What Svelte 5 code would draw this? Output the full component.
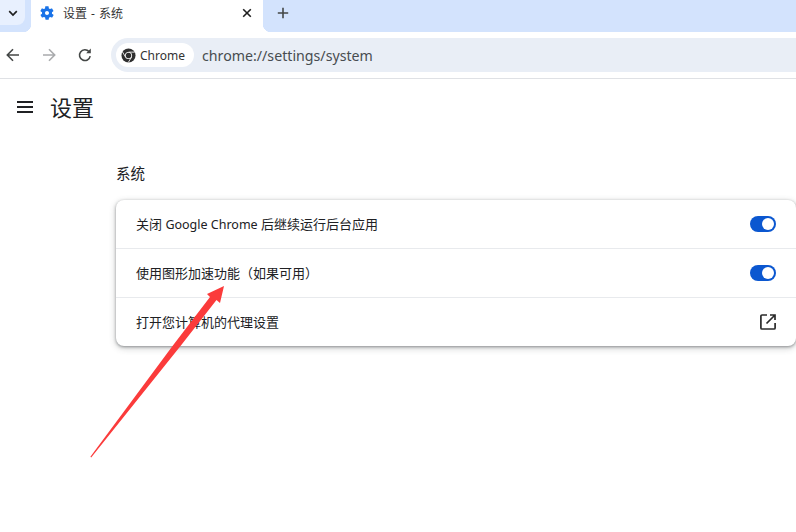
<script>
  const rows = [
    { before: "关闭 ", latin: "Google Chrome", after: " 后继续运行后台应用", toggle: true },
    { before: "使用图形加速功能（如果可用）", toggle: true },
    { before: "打开您计算机的代理设置", toggle: false },
  ];
</script>

<div class="browser">
  <header class="tabstrip">
    <button class="tab-search" aria-label="搜索标签页">
      <svg width="12" height="12" viewBox="0 0 12 12"><path d="M2.2 4.2 6 8l3.8-3.8" fill="none" stroke="#1f1f1f" stroke-width="1.7" /></svg>
    </button>
    <div class="tab">
      <svg class="gear" width="16" height="16" viewBox="0 0 24 24"><path fill="#1a73e8" d="M19.4 13c.1-.3.1-.7.1-1s0-.7-.1-1l2.1-1.6c.2-.2.2-.4.1-.6l-2-3.5c-.1-.2-.4-.3-.6-.2l-2.5 1c-.5-.4-1.1-.7-1.7-1l-.4-2.6c0-.3-.2-.5-.5-.5h-4c-.3 0-.5.2-.5.4l-.4 2.7c-.6.2-1.1.6-1.7 1l-2.5-1c-.2-.1-.5 0-.6.2l-2 3.5c-.1.2-.1.5.1.6L4.600 11c0 .3-.1.7-.1 1s0 .7.1 1l-2.1 1.6c-.2.2-.2.4-.1.6l2 3.500c.1.2.4.3.6.2l2.500-1c.5.4 1.100.7 1.700 1l.4 2.600c0 .3.2.5.5.5h4c.3 0 .5-.2.5-.4l.4-2.700c.6-.2 1.100-.6 1.700-1l2.500 1c.2.1.5 0 .6-.2l2-3.500c.1-.2.1-.5-.1-.6L19.400 13zM12 15c-1.700 0-3-1.300-3-3s1.300-3 3-3 3 1.300 3 3-1.300 3-3 3z" /></svg>
      <span class="tab-title">设置 - 系统</span>
      <svg class="tab-close" width="10" height="10" viewBox="0 0 10 10"><path d="M1.200 1.200l7.600 7.600M8.800 1.200 1.200 8.800" stroke="#1f1f1f" stroke-width="1.6" /></svg>
    </div>
    <svg class="new-tab" width="12" height="12" viewBox="0 0 12 12"><path d="M6 .8v10.400M.8 6h10.400" stroke="#444746" stroke-width="1.6" /></svg>
  </header>

  <nav class="toolbar">
    <div class="nav-icons">
      <svg width="16" height="16" viewBox="0 0 16 16"><path d="M14 8H2.500M8 2.200 2.300 8 8 13.800" fill="none" stroke="#444746" stroke-width="1.6" /></svg>
      <svg width="16" height="16" viewBox="0 0 16 16"><path d="M2 8h11.500M8 2.200 13.700 8 8 13.800" fill="none" stroke="#a9abad" stroke-width="1.6" /></svg>
      <svg width="16" height="16" viewBox="0 0 16 16"><path d="M13.200 9.200A5.400 5.400 0 1 1 12 4.600" fill="none" stroke="#444746" stroke-width="1.6" /><path d="M13.800 1.600v4.600H9.200z" fill="#444746" /></svg>
    </div>
    <div class="omnibox">
      <div class="chip">
        <svg width="15" height="15" viewBox="0 0 16 16">
          <circle cx="8" cy="8" r="7.500" fill="#2f2f2f" />
          <path d="M8 4.400h6.600M4.900 9.800 1.600 4.200M11.100 9.800 7.800 15.400" stroke="#fff" stroke-width="0.9" />
          <circle cx="8" cy="8" r="3.800" fill="#fff" />
          <circle cx="8" cy="8" r="2.900" fill="#2f2f2f" />
        </svg>
        <span>Chrome</span>
      </div>
      <span class="url">chrome://settings/system</span>
    </div>
  </nav>

  <main class="page">
    <div class="page-head">
      <svg class="menu" width="16" height="12" viewBox="0 0 16 12"><path d="M0 1h16M0 6h16M0 11h16" stroke="#202124" stroke-width="2" /></svg>
      <h1>设置</h1>
    </div>

    <section class="system">
      <h2>系统</h2>
      <div class="card">
        {#each rows as row}
          <div class="row">
            <span class="label">{row.before}{#if row.latin}<span class="latin">{row.latin}</span>{row.after}{/if}</span>
            {#if row.toggle}
              <div class="toggle"><i></i></div>
            {:else}
              <svg width="16" height="16" viewBox="0 0 16 16"><path d="M7 1H2a1.100 1.100 0 0 0-1.100 1.100v11.800A1.100 1.100 0 0 0 2 15h12a1.100 1.100 0 0 0 1.100-1.100V9" fill="none" stroke="#2b2b2b" stroke-width="1.700" /><path d="M10 1h5v5M15 1 6.500 9.500" fill="none" stroke="#2b2b2b" stroke-width="1.700" /></svg>
            {/if}
          </div>
        {/each}
      </div>
    </section>
  </main>

  <svg class="arrow" width="796" height="532" viewBox="0 0 796 532">
    <path fill="#fb3b3b" d="M90.400 456.800 L172.500 346 L210 297 L207 294 L224 286 L220 303 L216.500 300 L180.500 346 L91.200 457.600 Z" />
  </svg>
</div>

<style>
  :global(body) {
    margin: 0;
    background: #fff;
    font-family: "Noto Sans", "Noto Sans CJK SC", sans-serif;
    color: #1f1f1f;
  }

  .browser {
    position: relative;
    width: 796px;
    height: 532px;
    overflow: hidden;
  }

  .tabstrip {
    display: flex;
    align-items: flex-start;
    height: 32px;
    background: #d3e3fd;
  }

  .tab-search {
    display: flex;
    align-items: center;
    justify-content: center;
    width: 25px;
    height: 25px;
    padding: 0;
    border: none;
    border-bottom-right-radius: 8px;
    background: #e8f0fe;
  }

  .tab {
    position: relative;
    display: flex;
    align-items: center;
    box-sizing: border-box;
    width: 232px;
    height: 32px;
    margin-left: 6px;
    padding: 0 11px 7px 8px;
    background: #fff;
  }

  .tab::before,
  .tab::after {
    content: "";
    position: absolute;
    bottom: 0;
    width: 8px;
    height: 8px;
  }

  .tab::before {
    left: -8px;
    background: radial-gradient(circle at 0 0, transparent 8px, #fff 8.5px);
  }

  .tab::after {
    right: -8px;
    background: radial-gradient(circle at 100% 0, transparent 8px, #fff 8.5px);
  }

  .gear {
    flex: none;
  }

  .tab-title {
    flex: 1;
    margin-left: 8px;
    font-size: 12px;
    word-spacing: 1px;
    color: #333;
  }

  .new-tab {
    margin: 7px 0 0 14px;
  }

  .toolbar {
    display: flex;
    align-items: center;
    box-sizing: border-box;
    height: 47px;
    padding-left: 5px;
    border-bottom: 1px solid #dfe1e5;
  }

  .nav-icons {
    display: flex;
    gap: 20px;
    align-items: center;
    width: 106px;
    flex: none;
  }

  .omnibox {
    display: flex;
    align-items: center;
    flex: 1;
    height: 34px;
    padding-left: 5px;
    border-radius: 17px 0 0 17px;
    background: #e9eef6;
  }

  .chip {
    display: flex;
    align-items: center;
    gap: 4px;
    box-sizing: border-box;
    width: 78px;
    height: 24px;
    padding-left: 5px;
    border-radius: 12px;
    background: #fff;
    font-size: 12px;
    color: #333;
  }

  .url {
    margin-left: 8px;
    font-size: 14.2px;
    color: #474c50;
  }

  .page-head {
    display: flex;
    align-items: center;
    gap: 17px;
    height: 54px;
    padding-left: 17px;
  }

  .menu {
    margin-top: 2px;
  }

  h1 {
    margin: 0;
    font-size: 22px;
    font-weight: 400;
    color: #202124;
  }

  .system {
    padding: 30px 0 0 116px;
  }

  h2 {
    margin: 0 0 17px;
    font-size: 14.5px;
    line-height: 20px;
    font-weight: 400;
    color: #202124;
  }

  .card {
    border-radius: 8px;
    background: #fff;
    box-shadow: 0 1px 3px rgba(60, 64, 67, 0.5), 0 2px 6px 1px rgba(60, 64, 67, 0.2);
  }

  .row {
    display: flex;
    align-items: center;
    justify-content: space-between;
    height: 48px;
    padding: 0 20px;
    font-size: 13px;
    color: #202124;
  }

  .row + .row {
    border-top: 1px solid #e8eaed;
  }

  .label {
    margin-bottom: 2px;
  }

  .latin {
    font-size: 12.5px;
  }

  .toggle {
    display: flex;
    align-items: center;
    justify-content: flex-end;
    box-sizing: border-box;
    width: 26px;
    height: 16px;
    padding-right: 2px;
    border-radius: 8px;
    background: #0b57d0;
  }

  .toggle i {
    width: 12px;
    height: 12px;
    border-radius: 50%;
    background: #fff;
  }

  .arrow {
    position: absolute;
    inset: 0;
    pointer-events: none;
  }
</style>
